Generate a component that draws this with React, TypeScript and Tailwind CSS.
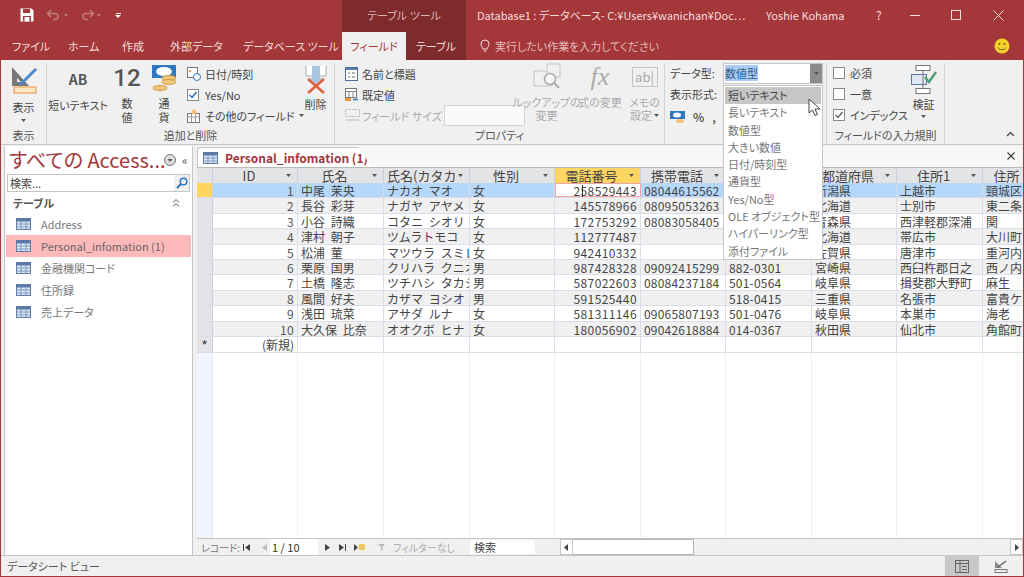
import React from 'react';

const widths = [85, 86, 86, 85, 86, 85, 86, 85, 86, 60];
const headers = ['ID', '氏名', '氏名(カタカ', '性別', '電話番号', '携帯電話', '郵便番号', '都道府県', '住所1', '住所'];
const rows = [
  ['1', '中尾 茉央', 'ナカオ マオ', '女', '258529443', '08044615562', '', '新潟県', '上越市', '頸城区'],
  ['2', '長谷 彩芽', 'ナガヤ アヤメ', '女', '145578966', '08095053263', '', '北海道', '士別市', '東二条'],
  ['3', '小谷 詩織', 'コタニ シオリ', '女', '172753292', '08083058405', '', '青森県', '西津軽郡深浦', '関'],
  ['4', '津村 朝子', 'ツムラトモコ', '女', '112777487', '', '', '北海道', '帯広市', '大川町'],
  ['5', '松浦 菫', 'マツウラ スミレ', '女', '942410332', '', '', '佐賀県', '唐津市', '重河内'],
  ['6', '栗原 国男', 'クリハラ クニオ', '男', '987428328', '09092415299', '882-0301', '宮崎県', '西臼杵郡日之', '西ノ内'],
  ['7', '土橋 隆志', 'ツチハシ タカシ', '男', '587022603', '08084237184', '501-0564', '岐阜県', '揖斐郡大野町', '麻生'],
  ['8', '風間 好夫', 'カザマ ヨシオ', '男', '591525440', '', '518-0415', '三重県', '名張市', '富貴ケ'],
  ['9', '浅田 琉菜', 'アサダ ルナ', '女', '581311146', '09065807193', '501-0476', '岐阜県', '本巣市', '海老'],
  ['10', '大久保 比奈', 'オオクボ ヒナ', '女', '180056902', '09042618884', '014-0367', '秋田県', '仙北市', '角館町'],
];
const dataTypes = ['短いテキスト', '長いテキスト', '数値型', '大きい数値', '日付/時刻型', '通貨型', 'Yes/No型', 'OLE オブジェクト型', 'ハイパーリンク型', '添付ファイル'];
const navItems = ['Address', 'Personal_infomation (1)', '金融機関コード', '住所録', '売上データ'];

const TableIcon = () => (
  <svg width="15" height="12" viewBox="0 0 15 12" className="shrink-0">
    <rect x="0.5" y="0.5" width="14" height="11" fill="#dfe7f3" stroke="#5b7aa8" />
    <rect x="1" y="1" width="13" height="2.5" fill="#5b7aa8" />
    <path d="M0.5 6h14M0.5 9h14M5 3v8M10 3v8" stroke="#7f9ac0" strokeWidth="1" />
  </svg>
);

const Arrow = () => (
  <svg width="5" height="3" viewBox="0 0 5 3" className="shrink-0"><path d="M0 0h5L2.5 3z" fill="#555" /></svg>
);

const Check = ({ on = false, gray = false }: { on?: boolean; gray?: boolean }) => (
  <span className="w-[12px] h-[12px] border border-[#888] bg-white flex items-center justify-center shrink-0">
    {on && (
      <svg width="10" height="10" viewBox="0 0 10 10">
        <path d="M1.5 5l2.5 2.5L8.5 2" fill="none" stroke={gray ? '#666' : '#2b6cb8'} strokeWidth="1.5" />
      </svg>
    )}
  </span>
);

const Group = ({ w, label, children }: { w: string; label: string; children: React.ReactNode }) => (
  <div className={`${w} h-[81px] mt-[3px] flex flex-col border-r border-[#d2d2d2] shrink-0`}>
    <div className="flex-1 flex min-h-0">{children}</div>
    <div className="h-[15px] text-center text-[11px] leading-[13px] text-[#555]">{label}</div>
  </div>
);

const NavGlyph = ({ d, light = false }: { d: string; light?: boolean }) => (
  <svg width="9" height="9" viewBox="0 0 9 9" className="shrink-0"><path d={d} fill={light ? '#bbb' : '#444'} /></svg>
);

export default function App() {
  return (
    <div className="relative w-[1024px] h-[577px] flex flex-col overflow-hidden border-x border-b border-[#a4373a] bg-[#f0f0f0] text-[#444] [font-family:'Noto_Sans_CJK_JP','Noto_Sans',sans-serif] [font-feature-settings:'palt']">
      {/* title bar */}
      <div className="h-[30px] bg-[#a4373a] flex items-center text-[11px] text-[#f5dede] shrink-0 -mx-px">
        <div className="w-[342px] flex items-center shrink-0">
          <svg width="14" height="14" viewBox="0 0 14 14" className="ml-[20px]">
            <path d="M0.5 0.5h11l2 2v11H0.5z" fill="#fff" />
            <rect x="3" y="1" width="7" height="4" fill="#a4373a" />
            <rect x="3" y="8" width="8" height="5.5" fill="#a4373a" />
            <rect x="4.5" y="9" width="5" height="4.5" fill="#fff" />
          </svg>
          <svg width="16" height="12" viewBox="0 0 16 12" className="ml-[12px]">
            <path d="M5 1L1.5 4.5 5 8M2 4.5h7a3 3 0 010 6H7" fill="none" stroke="#c47d7f" strokeWidth="1.5" />
          </svg>
          <span className="ml-[2px] w-0 h-0 border-x-[2.5px] border-x-transparent border-t-[3px] border-t-[#c47d7f]" />
          <svg width="16" height="12" viewBox="0 0 16 12" className="ml-[11px]">
            <path d="M11 1l3.5 3.5L11 8M14 4.5H7a3 3 0 000 6h2" fill="none" stroke="#c47d7f" strokeWidth="1.5" />
          </svg>
          <span className="ml-[2px] w-0 h-0 border-x-[2.5px] border-x-transparent border-t-[3px] border-t-[#c47d7f]" />
          <span className="ml-[14px] flex flex-col items-center gap-[1px]">
            <span className="w-[5px] h-px bg-white" />
            <span className="w-0 h-0 border-x-[3px] border-x-transparent border-t-[3px] border-t-white" />
          </span>
        </div>
        <div className="w-[124px] h-full bg-[#7e2b2d] flex items-center justify-center text-[#d9b4b5] shrink-0">テーブル ツール</div>
        <div className="ml-[11px] w-[289px] whitespace-nowrap overflow-hidden">Database1 : データベース- C:¥Users¥wanichan¥Doc…</div>
        <div className="w-[110px] whitespace-nowrap">Yoshie Kohama</div>
        <div className="w-[34px] text-[12px]">?</div>
        <div className="w-[41px] flex"><span className="w-[10px] h-px bg-[#f5dede]" /></div>
        <div className="w-[42px] flex"><span className="w-[10px] h-[10px] border border-[#f5dede]" /></div>
        <svg width="11" height="11" viewBox="0 0 11 11"><path d="M0.5 0.5l10 10M10.5 0.5l-10 10" stroke="#f5dede" /></svg>
      </div>

      {/* tabs */}
      <div className="h-[30px] bg-[#a4373a] flex items-end text-[11px] text-[#f5dede] shrink-0 -mx-px">
        <div className="w-[342px] h-[30px] flex items-center shrink-0 whitespace-nowrap pt-[2px]">
          <span className="w-[68px] pl-[12px]">ファイル</span>
          <span className="w-[54px]">ホーム</span>
          <span className="w-[48px]">作成</span>
          <span className="w-[73px]">外部データ</span>
          <span>データベース ツール</span>
        </div>
        <div className="w-[124px] h-full flex bg-[#7e2b2d] shrink-0">
          <div className="w-[64px] h-[28px] mt-[2px] bg-[#f0f0f0] text-[#a4373a] flex items-center justify-center whitespace-nowrap">フィールド</div>
          <div className="flex-1 flex items-center justify-center pt-[2px] whitespace-nowrap">テーブル</div>
        </div>
        <div className="h-[30px] pt-[2px] ml-[14px] flex items-center gap-[5px] text-[#e3b9ba] whitespace-nowrap">
          <svg width="10" height="14" viewBox="0 0 10 14">
            <path d="M3 10C2.500 8 1 7.500 1 5a4 4 0 018 0c0 2.500-1.500 3-2 5zM3.500 12h3" fill="none" stroke="#f5dede" />
          </svg>
          実行したい作業を入力してください
        </div>
        <svg width="16" height="16" viewBox="0 0 16 16" className="ml-auto mr-[14px] mb-[6px]">
          <circle cx="8" cy="8" r="7.500" fill="#f5d327" />
          <circle cx="5.500" cy="6" r="1" fill="#6b5a10" />
          <circle cx="10.500" cy="6" r="1" fill="#6b5a10" />
          <path d="M4 9.500c1.500 3 6.500 3 8 0" fill="none" stroke="#6b5a10" />
        </svg>
      </div>

      {/* ribbon */}
      <div className="h-[85px] flex border-b border-[#c6c6c6] shrink-0 text-[11px] leading-[14px]">
        <Group w="w-[46px]" label="表示">
          <div className="w-full flex flex-col items-center pt-[2px]">
            <svg width="28" height="29" viewBox="0 0 28 29">
              <path d="M2 2v19h17z" fill="#777" />
              <path d="M7 13v4h4z" fill="#f0f0f0" />
              <path d="M10 18L25 3l2 2-15 15-3 1z" fill="#4a86c8" />
              <rect x="4" y="22" width="22" height="6" fill="#fbe6c8" stroke="#e8953f" />
            </svg>
            <span className="mt-[6px]">表示</span>
            <span className="mt-[5px]"><Arrow /></span>
          </div>
        </Group>
        <Group w="w-[288px]" label="追加と削除">
          <div className="w-[62px] flex flex-col items-center">
            <span className="mt-[6px] h-[24px] text-[14px] leading-[20px] font-semibold text-[#555]">AB</span>
            <span className="mt-[5px] whitespace-nowrap">短いテキスト</span>
          </div>
          <div className="w-[36px] flex flex-col items-center">
            <span className="h-[30px] text-[24px] leading-[30px] text-[#555] font-medium font-['Roboto']">12</span>
            <span className="w-[12px] mt-[3px] text-center">数値</span>
          </div>
          <div className="w-[38px] flex flex-col items-center">
            <svg width="26" height="30" viewBox="0 0 26 30">
              <rect x="1" y="2" width="24" height="13" fill="#2f77bf" />
              <ellipse cx="13" cy="8.500" rx="8" ry="4.500" fill="#fff" />
              <ellipse cx="18" cy="15" rx="7" ry="2.500" fill="#f0c77f" stroke="#d89a3c" />
              <ellipse cx="18" cy="19" rx="7" ry="2.500" fill="#f0c77f" stroke="#d89a3c" />
              <ellipse cx="9" cy="25" rx="7" ry="2.500" fill="#f0c77f" stroke="#d89a3c" />
            </svg>
            <span className="w-[12px] mt-[3px] text-center">通貨</span>
          </div>
          <div className="w-[114px] pl-[4px] flex flex-col pt-[2px] gap-[4px] whitespace-nowrap">
            <div className="h-[17px] flex items-center gap-[4px]">
              <svg width="14" height="14" viewBox="0 0 14 14" className="shrink-0">
                <rect x="0.500" y="0.500" width="10" height="10" fill="#fff" stroke="#777" />
                <rect x="2" y="3" width="2" height="2" fill="#e8953f" />
                <circle cx="10" cy="10" r="3.500" fill="#fff" stroke="#2f77bf" />
              </svg>
              日付/時刻
            </div>
            <div className="h-[17px] flex items-center gap-[6px]">
              <Check on />
              Yes/No
            </div>
            <div className="h-[17px] flex items-center gap-[5px]">
              <svg width="13" height="14" viewBox="0 0 13 14" className="shrink-0">
                <rect x="0.500" y="4.500" width="12" height="9" fill="#fff" stroke="#777" />
                <path d="M4.500 4.500v9M8.500 4.500v9M0.500 8h12" stroke="#999" />
                <circle cx="7" cy="3" r="2.500" fill="#edc17b" />
              </svg>
              その他のフィールド
              <Arrow />
            </div>
          </div>
          <div className="flex-1 flex flex-col items-center">
            <svg width="22" height="30" viewBox="0 0 22 30" className="mt-[1px]">
              <path d="M1 2v10h20V2" fill="#fff" stroke="#aaa" />
              <rect x="7" y="2" width="8" height="14" fill="#a8c4e0" />
              <path d="M4 14h14l-7 6z" fill="#a8c4e0" />
              <path d="M3 15l16 14M19 15L3 29" stroke="#e0603a" strokeWidth="2.500" />
            </svg>
            <span className="mt-[3px]">削除</span>
          </div>
        </Group>
        <Group w="w-[330px]" label="プロパティ">
          <div className="w-[183px] pl-[10px] pt-[2px] flex flex-col gap-[4px] whitespace-nowrap shrink-0">
            <div className="h-[17px] flex items-center gap-[4px]">
              <svg width="13" height="14" viewBox="0 0 13 14" className="shrink-0">
                <rect x="0.500" y="0.500" width="12" height="13" fill="#fff" stroke="#4a6f9f" />
                <rect x="1" y="1" width="11" height="2" fill="#5b7aa8" />
                <path d="M3 6h2M3 10h2M7 6h3M7 10h3" stroke="#666" />
              </svg>
              名前と標題
            </div>
            <div className="h-[17px] flex items-center gap-[4px]">
              <svg width="13" height="14" viewBox="0 0 13 14" className="shrink-0">
                <rect x="0.500" y="0.500" width="11" height="9" fill="#fff" stroke="#777" />
                <path d="M0.500 3.500h11M4 3.500v6M8 3.500v6" stroke="#888" />
                <rect x="0" y="10" width="6" height="3" fill="#e8953f" />
                <path d="M13 11.500H8" stroke="#2f77bf" strokeWidth="1.500" />
              </svg>
              既定値
            </div>
            <div className="h-[17px] flex items-center gap-[2px] text-[#aaa]">
              <svg width="15" height="13" viewBox="0 0 15 13" className="shrink-0">
                <rect x="0.500" y="0.500" width="14" height="7" fill="none" stroke="#bbb" strokeDasharray="2 1" />
                <path d="M1 11h13" stroke="#bbb" />
              </svg>
              フィールド サイズ
              <span className="ml-auto w-[81px] h-[21px] bg-[#fafafa] border border-[#d4d4d4] shrink-0" />
            </div>
          </div>
          <div className="w-[57px] flex flex-col items-center text-[#aaa] shrink-0">
            <svg width="28" height="30" viewBox="0 0 28 30">
              <rect x="1" y="8" width="18" height="15" fill="#f0f0f0" stroke="#c4c4c4" />
              <rect x="14" y="1" width="13" height="13" fill="#f0f0f0" stroke="#c4c4c4" />
              <circle cx="17" cy="16" r="5.500" fill="#f7f7f7" stroke="#aaa" strokeWidth="1.500" />
              <path d="M21 20l5 5" stroke="#aaa" strokeWidth="2" />
            </svg>
            <span className="whitespace-nowrap leading-[14px] mt-[2px]">ルックアップの</span>
            <span className="leading-[13px]">変更</span>
          </div>
          <div className="w-[50px] flex flex-col items-center text-[#aaa] shrink-0">
            <span className="h-[30px] text-[26px] leading-[28px] italic font-['Liberation_Serif']">fx</span>
            <span className="mt-[2px] whitespace-nowrap">式の変更</span>
          </div>
          <div className="flex-1 flex flex-col items-center text-[#aaa]">
            <span className="mt-[4px] w-[26px] h-[20px] border border-[#c4c4c4] text-[13px] leading-[17px] text-center">ab|</span>
            <span className="mt-[8px] leading-[14px]">メモの</span>
            <span className="flex items-center gap-[2px] leading-[13px]">設定<Arrow /></span>
          </div>
        </Group>
        <Group w="w-[162px]" label="">
          <div className="pl-[5px] pt-[3px] flex flex-col gap-[7px] whitespace-nowrap">
            <span className="h-[14px]">データ型:</span>
            <span className="h-[14px]">表示形式:</span>
            <span className="h-[18px] flex items-center gap-[8px] font-medium">
              <svg width="15" height="14" viewBox="0 0 15 14" className="shrink-0">
                <rect x="0" y="1" width="15" height="8" fill="#2f77bf" />
                <ellipse cx="7" cy="5" rx="4" ry="2.500" fill="#fff" />
                <ellipse cx="10" cy="11" rx="4" ry="2" fill="#f0c77f" />
              </svg>
              <span className="text-[12px]">%</span>
              <span className="text-[12px]">,</span>
            </span>
          </div>
        </Group>
        <Group w="w-[118px]" label="フィールドの入力規則">
          <div className="w-[76px] pl-[6px] pt-[3px] flex flex-col gap-[7px] whitespace-nowrap">
            <div className="h-[14px] flex items-center gap-[5px]"><Check />必須</div>
            <div className="h-[14px] flex items-center gap-[5px]"><Check />一意</div>
            <div className="h-[14px] flex items-center gap-[5px]"><Check on gray />インデックス</div>
          </div>
          <div className="flex-1 flex flex-col items-center">
            <svg width="26" height="29" viewBox="0 0 26 29" className="mt-[2px]">
              <rect x="5" y="0.500" width="14" height="5" fill="#fff" stroke="#777" />
              <rect x="0.500" y="9.500" width="15" height="10" fill="#dfe7f3" stroke="#5b7aa8" />
              <rect x="5" y="23.500" width="14" height="5" fill="#fff" stroke="#777" />
              <path d="M12 5.500v18" stroke="#777" />
              <path d="M14 12l4 5 7-10" fill="none" stroke="#4f9f76" strokeWidth="2.500" />
            </svg>
            <span className="mt-[3px]">検証</span>
            <span className="mt-[4px]"><Arrow /></span>
          </div>
        </Group>
        <div className="flex-1 flex items-end justify-end pr-[8px] pb-[7px]">
          <svg width="9" height="6" viewBox="0 0 9 6"><path d="M1 5l3.500-3.500L8 5" fill="none" stroke="#555" strokeWidth="1.500" /></svg>
        </div>
      </div>

      {/* body */}
      <div className="flex-1 flex min-h-0 pt-[1px]">
        {/* navigation pane */}
        <div className="w-[189px] ml-[3px] bg-white border-x border-[#c6c6c6] flex flex-col shrink-0">
          <div className="h-[28px] flex items-center pl-[4px] shrink-0">
            <span className="text-[20px] leading-[26px] text-[#a4373a] whitespace-nowrap w-[155px]">すべての Access...</span>
            <svg width="12" height="12" viewBox="0 0 12 12" className="shrink-0">
              <circle cx="6" cy="6" r="5.500" fill="#ddd" stroke="#777" />
              <path d="M3.500 5h5L6 8z" fill="#555" />
            </svg>
            <span className="ml-[6px] text-[12px] leading-[12px] text-[#555]">«</span>
          </div>
          <div className="h-[18px] mx-[2px] border border-[#c6c6c6] flex items-center text-[11px] pl-[2px] shrink-0">
            検索...
            <span className="ml-auto w-[15px] h-full bg-[#f0f0f0] flex items-center justify-center">
              <svg width="12" height="12" viewBox="0 0 12 12">
                <circle cx="7.500" cy="4.500" r="3.300" fill="none" stroke="#2f77bf" strokeWidth="1.500" />
                <path d="M5 7l-4 4" stroke="#2f77bf" strokeWidth="2" />
              </svg>
            </span>
          </div>
          <div className="h-[20px] flex items-center pl-[8px] pr-[12px] mt-[1px] text-[11px] font-bold text-[#555] shrink-0">
            テーブル
            <span className="ml-auto">
              <svg width="8" height="8" viewBox="0 0 8 8"><path d="M1 3.500l3-3 3 3M1 7.500l3-3 3 3" fill="none" stroke="#555" /></svg>
            </span>
          </div>
          <div className="flex flex-col text-[11px] text-[#777]">
            {navItems.map((n, i) => (
              <div key={n} className={`h-[22px] mx-px flex items-center pl-[10px] gap-[10px] whitespace-nowrap ${i === 1 ? 'bg-[#feb9bb] text-[#666]' : ''}`}>
                <TableIcon />
                {n}
              </div>
            ))}
          </div>
        </div>

        {/* document area */}
        <div className="flex-1 ml-[4px] min-w-0 flex flex-col">
          <div className="h-[21px] flex items-end bg-[#f7f7f7] shrink-0">
            <div className="w-[175px] h-[20px] bg-white border-t border-l border-[#c6c6c6] rounded-tl-[3px] flex items-center pl-[5px] gap-[7px] text-[12px] font-bold text-[#a4373a] whitespace-nowrap [clip-path:polygon(0_0,92%_0,100%_100%,0_100%)]">
              <TableIcon />
              Personal_infomation (1)
            </div>
            <svg width="8" height="8" viewBox="0 0 8 8" className="ml-auto mr-[8px] mb-[7px]"><path d="M0.500 0.500l7 7M7.500 0.500l-7 7" stroke="#444" strokeWidth="1.200" /></svg>
          </div>

          {/* datasheet */}
          <div className="flex-1 min-h-0 flex flex-col bg-white overflow-hidden text-[12px] leading-[15px] text-[#444] [font-feature-settings:normal] [word-spacing:3px]">
            <div className="h-[16px] flex border-t border-[#b9b9b9] bg-[#e4e4e6] shrink-0 text-[13px]">
              <div className="w-[16px] border-r border-[#c9cfdd] shrink-0" />
              {headers.map((h, i) => (
                <div key={h} style={{ width: widths[i] }} className={`shrink-0 relative border-r border-[#c9cfdd] whitespace-nowrap overflow-hidden flex items-center ${i === 4 ? 'bg-[#fdd563]' : ''} ${i === 2 ? 'pl-[3px]' : 'justify-center pr-[12px]'}`}>
                  {h}
                  <span className="absolute right-[6px] top-[6px]"><Arrow /></span>
                </div>
              ))}
            </div>
            {rows.map((r, ri) => {
              const rowBg = ri === 0 ? 'bg-[#b5d7fa]' : ri % 2 === 1 ? 'bg-[#f0f0f0]' : 'bg-white';
              return (
                <div key={r[0]} className={`h-[15.400px] flex border-b border-[#d9deea] shrink-0 ${rowBg}`}>
                  <div className={`w-[16px] border-r border-[#c9cfdd] shrink-0 ${ri === 0 ? 'bg-[#ffd45f]' : 'bg-[#e2e4e8]'}`} />
                  {r.map((c, ci) => {
                    const right = ci === 0 || ci === 4;
                    const focus = ri === 0 && ci === 4;
                    return (
                      <div key={ci} style={{ width: widths[ci] }} className={`shrink-0 border-r border-[#d9deea] overflow-hidden whitespace-nowrap relative ${right ? 'text-right pr-[3px] tracking-[0.4px]' : 'pl-[3px]'} ${ci === 5 || ci === 6 ? 'tracking-[0.2px]' : ''} ${focus ? 'bg-white outline outline-[#f5a3a3] -outline-offset-1' : ''} ${ci === 0 ? 'text-[#555]' : ''}`}>
                        {c}
                        {focus && <span className="absolute left-[27px] top-[2px] w-px h-[12px] bg-[#333]" />}
                      </div>
                    );
                  })}
                </div>
              );
            })}
            <div className="h-[16px] flex border-b border-[#d9deea] shrink-0">
              <div className="w-[16px] bg-[#e2e4e8] border-r border-[#c9cfdd] text-center text-[14px] leading-[17px] shrink-0">*</div>
              {widths.map((w, i) => (
                <div key={i} style={{ width: w }} className={`shrink-0 border-r border-[#d9deea] ${i === 0 ? 'text-right pr-[3px]' : ''}`}>{i === 0 ? '(新規)' : ''}</div>
              ))}
            </div>
            <div className="flex-1 flex min-h-0">
              <div className="w-[16px] bg-[#f2f4fb] border-r border-[#e3e7f2] shrink-0" />
              {widths.map((w, i) => (
                <div key={i} style={{ width: w }} className="shrink-0 border-r border-[#eef0f6]" />
              ))}
            </div>
          </div>

          {/* record navigation */}
          <div className="h-[17px] flex items-center bg-[#f0f0f0] border-t border-[#c6c6c6] text-[10px] text-[#777] shrink-0 whitespace-nowrap">
            <span className="ml-[4px] w-[41px]">レコード:</span>
            <span className="flex gap-[9px]">
              <NavGlyph d="M1 1h1v7H1zM8 1v7L3 4.500z" />
              <NavGlyph d="M7 1v7L2 4.500z" light />
            </span>
            <span className="w-[48px] h-[16px] ml-[1px] bg-white text-[11px] leading-[16px] text-[#333] pl-[2px] shrink-0">1 / 10</span>
            <span className="flex gap-[6px] ml-[5px]">
              <NavGlyph d="M2 1v7l5-3.500z" />
              <NavGlyph d="M1 1v7l5-3.500zM7 1h1v7H7z" />
              <NavGlyph d="M1 1v7l4-3.500z" />
            </span>
            <span className="w-[6px] h-[6px] bg-[#edc65c] -ml-[3px]" />
            <span className="ml-[13px] text-[#aaa] flex items-center gap-[6px] w-[92px]">
              <svg width="9" height="9" viewBox="0 0 9 9" className="shrink-0"><path d="M0 1h7L4.500 4v4L3 7V4z" fill="#bbb" /></svg>
              フィルターなし
            </span>
            <span className="w-[65px] h-[14px] bg-white text-[#444] text-[11px] leading-[14px] pl-[4px] shrink-0">検索</span>
            <span className="ml-[25px] flex-1 h-full flex items-stretch">
              <span className="w-[13px] border border-[#c6c6c6] bg-white flex items-center justify-center"><NavGlyph d="M6 1v7L2 4.500z" /></span>
              <span className="w-[121px] bg-white border-y border-r border-[#b5b5b5]" />
              <span className="flex-1" />
              <span className="w-[13px] border border-[#c6c6c6] bg-white flex items-center justify-center"><NavGlyph d="M3 1v7l4-3.500z" /></span>
            </span>
          </div>
        </div>
      </div>

      {/* status bar */}
      <div className="h-[21px] flex items-center border-t border-[#c6c6c6] text-[11px] text-[#555] shrink-0">
        <span className="ml-[6px]">データシート ビュー</span>
        <span className="ml-auto w-[34px] h-full bg-[#c8c8c8] flex items-center justify-center">
          <svg width="14" height="13" viewBox="0 0 14 13">
            <rect x="0.500" y="0.500" width="13" height="12" fill="none" stroke="#666" />
            <path d="M0.500 3.500h13M5 0.500v12M7 6.500h5M7 9.500h5" stroke="#666" />
          </svg>
        </span>
        <span className="w-[44px] flex items-center justify-center">
          <svg width="14" height="13" viewBox="0 0 14 13">
            <path d="M1 1v7h7z" fill="#888" />
            <path d="M4 7l8-6" stroke="#666" strokeWidth="1.500" />
            <rect x="1" y="9.500" width="12" height="3" fill="none" stroke="#777" />
          </svg>
        </span>
      </div>

      {/* data type combo, open */}
      <div className="absolute left-[722px] top-[63px] w-[100px] h-[21px] flex bg-white border border-[#c6c6c6] text-[11px] leading-[19px]">
        <span className="flex-1 pl-[1px]"><span className="bg-[#a9cdf2] text-[#3b5f86]">数値型</span></span>
        <span className="w-[12px] bg-[#8c8c8c] flex items-center justify-center"><Arrow /></span>
      </div>
      <div className="absolute left-[722px] top-[85px] w-[100px] h-[175px] bg-white border border-[#c6c6c6] p-px text-[11px] text-[#777] whitespace-nowrap">
        {dataTypes.map((t, i) => (
          <div key={t} className={`h-[17.300px] leading-[17px] pl-[3px] ${i === 0 ? 'bg-[#c6c6c6] text-[#444]' : ''}`}>{t}</div>
        ))}
      </div>
      <svg width="13" height="19" viewBox="0 0 13 19" className="absolute left-[807px] top-[98px]">
        <path d="M1 1v14l3.500-3 2.500 5.500 2.500-1L7 11h5z" fill="#fff" stroke="#444" />
      </svg>
    </div>
  );
}
